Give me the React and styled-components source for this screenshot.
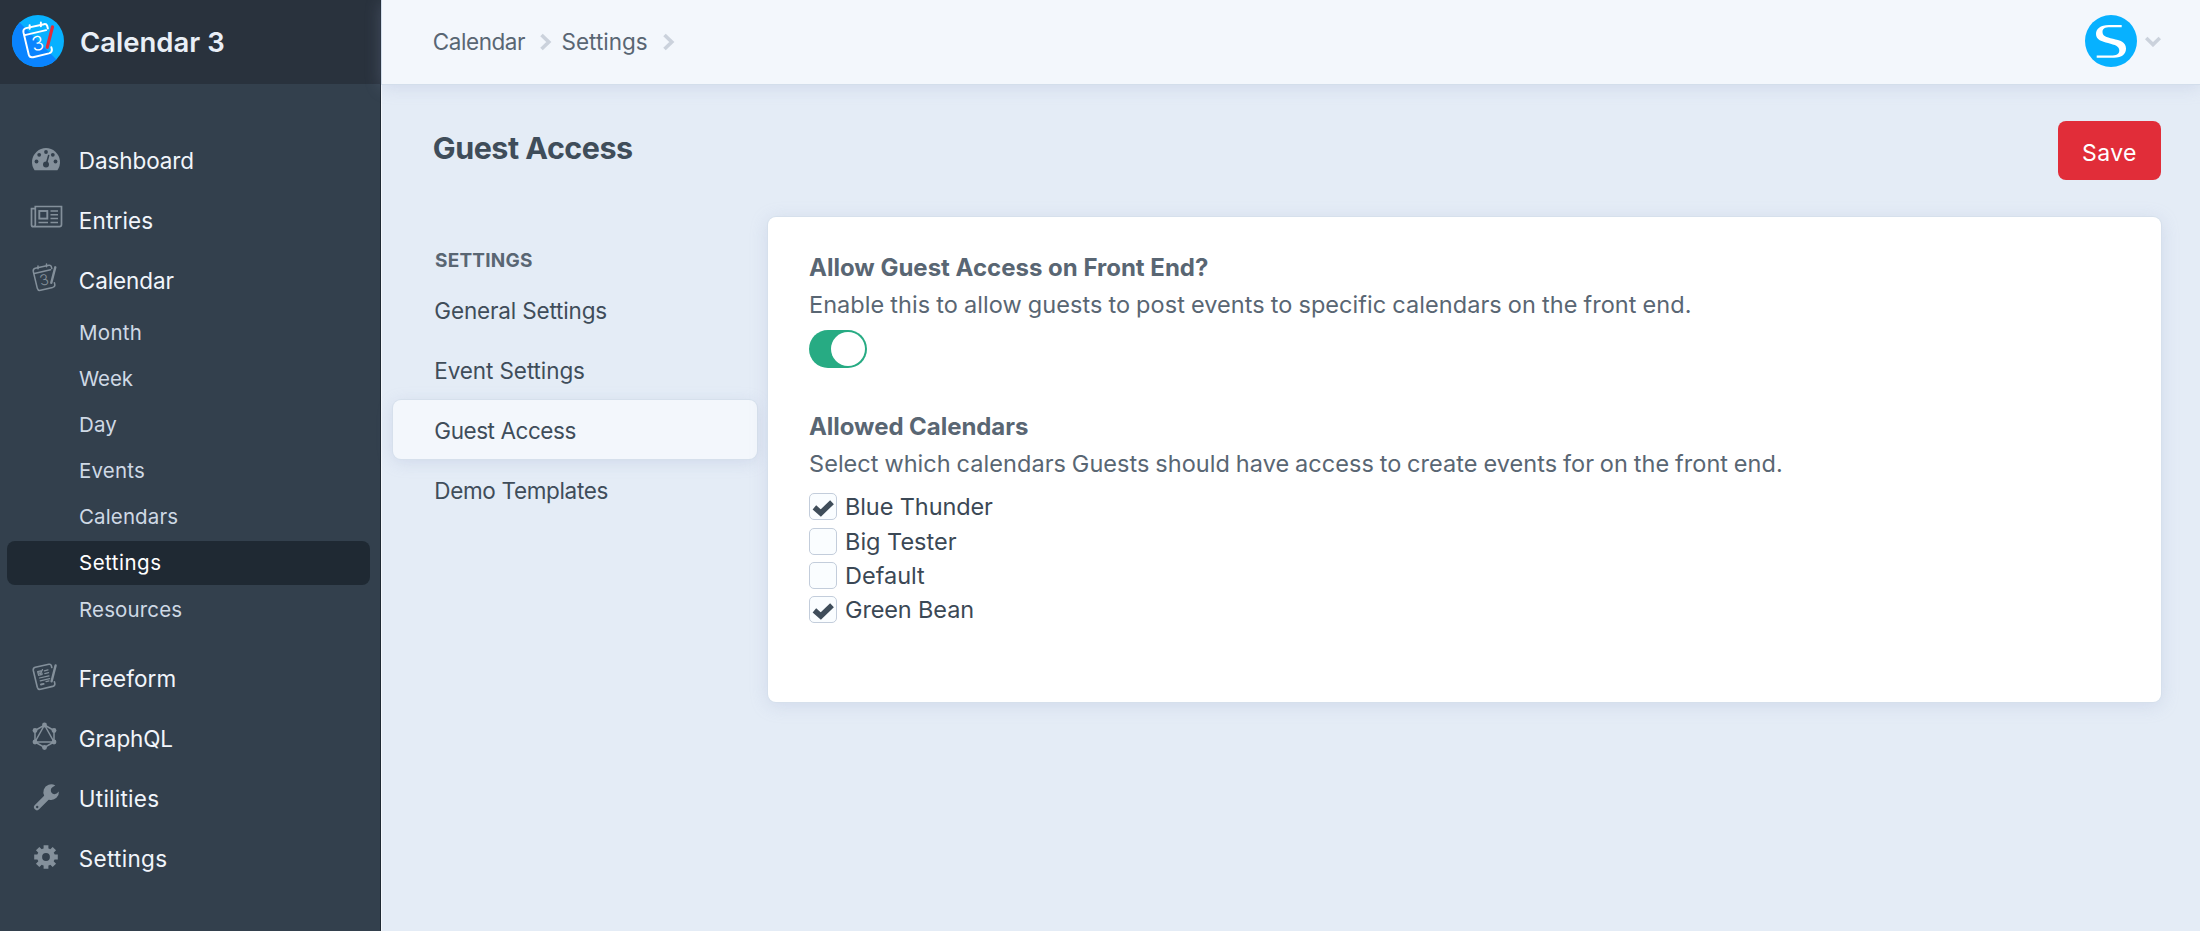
import React, { useState } from 'react';
import styled, { createGlobalStyle, css } from 'styled-components';

const GlobalStyle = createGlobalStyle`
  * { box-sizing: border-box; }
  body {
    margin: 0;
    background: #e4ecf6;
    font-family: Inter, Roboto, "Liberation Sans", sans-serif;
    color: #3f4d5a;
  }
`;

const tracking = css`
  letter-spacing: ${({ $track = 0 }) => $track}px;
  word-spacing: ${({ $word = 0 }) => $word}px;
`;

const Page = styled.div`
  display: flex;
  height: 931px;
  overflow: hidden;
`;

/* Sidebar */

const Sidebar = styled.aside`
  flex: none;
  width: 381px;
  background: #33404d;
  border-right: 1px solid #1f2933;
`;

const Brand = styled.header`
  display: flex;
  align-items: center;
  height: 84px;
  padding: 0 0 2px 12px;
  gap: 15px;
  background: #29323d;
`;

const BrandName = styled.span`
  padding-top: 2px;
  font-size: 27.5px;
  font-weight: 600;
  line-height: 36px;
  color: #e9eff7;
`;

const Nav = styled.nav`
  display: flex;
  flex-direction: column;
  padding-top: 46px;
`;

const NavItem = styled.a`
  display: flex;
  align-items: center;
  height: 60px;
  font-size: 22.5px;
  color: #f1f5fb;
  ${tracking}
`;

const NavIcon = styled.svg`
  flex: none;
  width: 78px;
  height: 60px;
  margin-right: 0.8px;
  color: #84909b;
`;

const SubNav = styled.div`
  display: flex;
  flex-direction: column;
  gap: 2.2px;
  margin: 0 0 17.6px;
`;

const SubNavItem = styled.a`
  display: flex;
  align-items: center;
  height: 44px;
  margin: 0 10px 0 7px;
  padding-left: 72px;
  border-radius: 8px;
  font-size: 20.5px;
  color: ${({ $active }) => ($active ? '#ffffff' : '#cfd9e5')};
  background: ${({ $active }) => ($active ? '#1f2933' : 'transparent')};
  ${tracking}
`;

/* Main area */

const Main = styled.main`
  flex: 1;
  min-width: 0;
  border-left: 1px solid #f3f7fc;
`;

const TopBar = styled.header`
  display: flex;
  justify-content: space-between;
  align-items: center;
  height: 84px;
  padding: 0 39px 2px 50.8px;
  background: #f3f7fc;
  box-shadow: 0 0 0 1px #d3deeb, 0 3px 16px rgba(154, 165, 205, 0.28);
`;

const Crumbs = styled.div`
  display: flex;
  align-items: center;
  font-size: 22.5px;
  color: #596673;
`;

const Crumb = styled.a`
  padding-top: 1px;
  ${tracking}
`;

const CrumbArrow = styled.svg`
  width: 12px;
  height: 18px;
  margin: 1px 9.5px 0 15px;
`;

const Account = styled.div`
  display: flex;
  align-items: center;
  gap: 8px;
`;

const TitleRow = styled.div`
  display: flex;
  justify-content: space-between;
  padding: 37px 39px 0 50.8px;
`;

const Title = styled.h1`
  margin: 7px 0 0;
  font-size: 30.5px;
  line-height: 40px;
  font-weight: 700;
  color: #3f4d5a;
  ${tracking}
`;

const SaveButton = styled.button`
  width: 103px;
  height: 59px;
  padding: 5px 0 0;
  border: 0;
  border-radius: 8px;
  background: #e12d39;
  color: #ffffff;
  font: 400 23px Inter, sans-serif;
  ${tracking}
`;

const Columns = styled.div`
  display: flex;
  align-items: flex-start;
  padding: 37px 39px 0 11px;
`;

const Menu = styled.nav`
  flex: none;
  width: 364px;
  margin-right: 11px;
  padding-top: 30px;
`;

const MenuHeading = styled.h6`
  margin: 0 0 6px;
  padding-left: 42px;
  font-size: 19px;
  font-weight: 700;
  line-height: 27px;
  color: #596673;
  ${tracking}
`;

const MenuItem = styled.a`
  display: flex;
  align-items: center;
  height: 59px;
  margin-bottom: 1px;
  padding: 1px 0 0 41.3px;
  border-radius: 8px;
  font-size: 22.5px;
  color: #3f4d5a;
  ${tracking}
  ${({ $active }) =>
    $active &&
    css`
      background: #f3f7fc;
      box-shadow: 0 0 0 1px #d6e0ec, 0 3px 16px rgba(154, 165, 205, 0.28);
    `}
`;

const Card = styled.section`
  flex: 1;
  height: 485px;
  padding: 31.5px 41px 0;
  border-radius: 8px;
  background: #ffffff;
  box-shadow: 0 0 0 1px #d6e0ec, 0 3px 18px rgba(154, 165, 205, 0.28);
`;

const Field = styled.div`
  & + & { margin-top: 40px; }
`;

const FieldHeading = styled.h2`
  margin: 0;
  font-size: 24px;
  font-weight: 700;
  line-height: 37px;
  color: #596673;
  ${tracking}
`;

const Instructions = styled.p`
  margin: 0;
  font-size: 23.5px;
  line-height: 38px;
  white-space: nowrap;
  color: #596673;
  ${tracking}
`;

const Switch = styled.button`
  display: flex;
  justify-content: ${({ $on }) => ($on ? 'flex-end' : 'flex-start')};
  width: 58px;
  height: 38px;
  margin: 6.5px 0 0;
  padding: 2px;
  border: 0;
  border-radius: 19px;
  background: ${({ $on }) => ($on ? '#27ab83' : '#9aa5b1')};
`;

const Knob = styled.span`
  width: 34px;
  height: 34px;
  border-radius: 50%;
  background: #ffffff;
`;

const Options = styled.div`
  margin-top: 6.8px;
`;

const Option = styled.label`
  display: flex;
  align-items: center;
  gap: 8px;
  height: 34.3px;
  font-size: 23.5px;
  color: #3b4855;
  ${tracking}
`;

const Box = styled.span`
  display: grid;
  place-items: center;
  width: 28px;
  height: 27px;
  border: 1.5px solid #c3cddb;
  border-radius: 5px;
  background: #fafdff;
`;

const CARD_OUTLINE =
  'M51.8 18.5 51.3 16.6Q50.7 14.9 48.9 15.3L35.3 18.3Q32.8 19 33.3 21.5L37.3 38.3Q38 40.9 40.6 40.3L52.6 37.4Q55.2 36.7 54.8 34.3L54.4 32.8';

function CalendarDrawing({ pen = 'currentColor' }) {
  return (
    <g fill="none" stroke="currentColor" strokeWidth="1.5" strokeLinecap="round">
      <path d={CARD_OUTLINE} />
      <path d="M34.3 23.6 50.5 19.8M38 16v2.8M46.5 14v2.8" />
      <path d="M55.3 17.3 51.3 32.8" stroke={pen} strokeWidth="2.4" />
      <text
        x="44" y="35.2" fill="currentColor" stroke="none" fontSize="15" fontWeight="300"
        textAnchor="middle" transform="rotate(-12 44 30)"
      >
        3
      </text>
    </g>
  );
}

function Logo() {
  return (
    <svg width="53" height="52" viewBox="0 0 53 52">
      <circle cx="26" cy="26" r="26" fill="#07b1ff" />
      <path d="M7.6 7.6A26 26 0 1 0 44.4 44.4Z" fill="#0a84ff" />
      <g color="#ffffff" transform="translate(-32.5 -11) scale(1.32)">
        <CalendarDrawing pen="#e12d39" />
      </g>
    </svg>
  );
}

const icons = {
  dashboard: (
    <>
      <path d="M34.6 40.2A14 14 0 1 1 57.4 40.2Z" fill="currentColor" />
      <g fill="#33404d" stroke="#33404d">
        {[[36.5, 31.5], [39.2, 24.8], [46, 22], [52.8, 24.8], [55.5, 31.5]].map(([x, y]) => (
          <circle key={x} cx={x} cy={y} r="1.9" stroke="none" />
        ))}
        <circle cx="46" cy="34.5" r="3" stroke="none" />
        <path d="M46.3 34 48.6 25.6" strokeWidth="1.6" strokeLinecap="round" />
      </g>
    </>
  ),
  entries: (
    <g fill="none" stroke="currentColor" strokeWidth="1.7">
      <path d="M35.3 35V16.5H61.5V34.6Q61.5 36.7 59.4 36.7H33.5Q31.5 36.7 31.5 34.7V18.7H35.3V34.7Q35.3 36.5 33.5 36.7" />
      <rect x="39.3" y="21" width="8" height="7.6" strokeWidth="1.9" />
      <path d="M50.5 21H58M50.5 24.8H58M50.5 28.6H58M50.5 32.4H58M38.5 32.4H48" strokeWidth="1.5" />
    </g>
  ),
  calendar: <CalendarDrawing />,
  freeform: (
    <g fill="none" stroke="currentColor" strokeWidth="1.6" strokeLinecap="round">
      <path d={CARD_OUTLINE} />
      <path d="M55.6 16.5 51.6 32.3" strokeWidth="2.4" />
      <path
        strokeWidth="1.2"
        d="M37.6 22.6 41 21.8M37.6 22.6 38.6 26.4 42 25.6V24M39 23.7 40.2 24.9 42.5 20.6M44.3 21.8 48 20.9M44.8 24.6 48.6 23.7M39.5 29 49 26.8M40.2 31.8 49.7 29.6M46 32.6 49 31.9"
      />
      <path d="M41 35.5 43.6 34.9" strokeWidth="2" />
    </g>
  ),
  graphql: (
    <g fill="currentColor" stroke="currentColor" strokeWidth="1.5">
      <path
        fill="none"
        d="M44.5 16 54 21.5V33L44.5 38.5 35 33V21.5ZM44.5 16 54 33H35Z"
      />
      {[[44.5, 16], [54, 21.5], [54, 33], [44.5, 38.5], [35, 33], [35, 21.5]].map(([x, y]) => (
        <circle key={`${x}-${y}`} cx={x} cy={y} r="2.4" stroke="none" />
      ))}
    </g>
  ),
  utilities: (
    <>
      <path
        fill="none" stroke="currentColor" strokeWidth="6" strokeLinecap="round"
        d="M37 38.2 48 27.2"
      />
      <path
        fill="currentColor"
        d="M55.3 16.6A7.8 7.8 0 1 0 58.9 22.6Q55.5 26.5 52.4 24.6Q50 22.6 51.2 19.6Q52.3 17.9 55.3 16.6Z"
      />
      <circle cx="37.2" cy="38" r="1.2" fill="#33404d" />
    </>
  ),
  settings: (
    <g stroke="currentColor" fill="none">
      <circle cx="46" cy="28" r="6.4" strokeWidth="5" />
      {[0, 45, 90, 135].map((a) => (
        <path
          key={a} strokeWidth="4.8" transform={`rotate(${a} 46 28)`}
          d="M46 16.2V21M46 35V39.8"
        />
      ))}
    </g>
  ),
};

const primary = [
  { label: 'Dashboard', icon: 'dashboard', track: -0.1 },
  { label: 'Entries', icon: 'entries', track: 0.15 },
  { label: 'Calendar', icon: 'calendar', track: -0.1 },
];

const calendarPages = [
  { label: 'Month', track: 0.3 },
  { label: 'Week', track: -0.1 },
  { label: 'Day', track: 0.1 },
  { label: 'Events', track: 0.2 },
  { label: 'Calendars', track: 0.12 },
  { label: 'Settings', track: 0.5, active: true },
  { label: 'Resources', track: 0.15 },
];

const secondary = [
  { label: 'Freeform', icon: 'freeform', track: 0.1 },
  { label: 'GraphQL', icon: 'graphql', track: -0.1 },
  { label: 'Utilities', icon: 'utilities', track: 0.25 },
  { label: 'Settings', icon: 'settings', track: 0.3 },
];

const menu = [
  { label: 'General Settings', track: -0.16 },
  { label: 'Event Settings', track: -0.1 },
  { label: 'Guest Access', track: -0.44, active: true },
  { label: 'Demo Templates', track: -0.34 },
];

const calendars = [
  { label: 'Blue Thunder', checked: true, track: -0.1 },
  { label: 'Big Tester', checked: false, track: 0 },
  { label: 'Default', checked: false, track: 0 },
  { label: 'Green Bean', checked: true, track: -0.13 },
];

function NavLinks({ items }) {
  return items.map(({ label, icon, track }) => (
    <NavItem key={label} $track={track}>
      <NavIcon viewBox="0 0 78 60">{icons[icon]}</NavIcon>
      {label}
    </NavItem>
  ));
}

function Chevron() {
  return (
    <CrumbArrow viewBox="0 0 12 18">
      <path d="M1.5 2 8.8 9 1.5 16" fill="none" stroke="#cbd2dc" strokeWidth="3.6" />
    </CrumbArrow>
  );
}

export default function App() {
  const [guests, setGuests] = useState(true);
  return (
    <Page>
      <GlobalStyle />
      <Sidebar>
        <Brand>
          <Logo />
          <BrandName>Calendar 3</BrandName>
        </Brand>
        <Nav>
          <NavLinks items={primary} />
          <SubNav>
            {calendarPages.map(({ label, track, active }) => (
              <SubNavItem key={label} $track={track} $active={active}>{label}</SubNavItem>
            ))}
          </SubNav>
          <NavLinks items={secondary} />
        </Nav>
      </Sidebar>
      <Main>
        <TopBar>
          <Crumbs>
            <Crumb $track={-0.45}>Calendar</Crumb>
            <Chevron />
            <Crumb>Settings</Crumb>
            <Chevron />
          </Crumbs>
          <Account>
            <svg width="52" height="52" viewBox="0 0 52 52">
              <circle cx="26" cy="26" r="26" fill="#07b1ff" />
              <path
                fill="#ffffff"
                d="M36.7 10H24C15 10 11 14 11 19C11 25 17 26.5 23 28C30 30 34.3 31 34.3 35.5C34.3 39.5 31 40.6 26 40.6H11.7V42.7H29C37 42.7 41 39 41 33.5C41 27 35 25.5 28 23.8C21 22 17.5 21 17.5 17C17.5 13.5 20 12.2 25 12.2H36.7Z"
              />
            </svg>
            <svg width="16" height="12" viewBox="0 0 16 12">
              <path d="M1.2 3 8 9.6 14.8 3" fill="none" stroke="#cbd2dc" strokeWidth="3.6" />
            </svg>
          </Account>
        </TopBar>
        <TitleRow>
          <Title $track={-0.5}>Guest Access</Title>
          <SaveButton $track={0.4}>Save</SaveButton>
        </TitleRow>
        <Columns>
          <Menu>
            <MenuHeading $track={0.22}>SETTINGS</MenuHeading>
            {menu.map(({ label, track, active }) => (
              <MenuItem key={label} $track={track} $active={active}>{label}</MenuItem>
            ))}
          </Menu>
          <Card>
            <Field>
              <FieldHeading>Allow Guest Access on Front End?</FieldHeading>
              <Instructions $track={0.05} $word={-0.6}>
                Enable this to allow guests to post events to specific calendars on the front end.
              </Instructions>
              <Switch $on={guests} onClick={() => setGuests(!guests)}>
                <Knob />
              </Switch>
            </Field>
            <Field>
              <FieldHeading $track={-0.05}>Allowed Calendars</FieldHeading>
              <Instructions $track={0.05} $word={-0.85}>
                Select which calendars Guests should have access to create events for on the front end.
              </Instructions>
              <Options>
                {calendars.map(({ label, checked, track }) => (
                  <Option key={label} $track={track}>
                    <Box>
                      {checked && (
                        <svg width="24" height="20" viewBox="0 0 24 20">
                          <path
                            d="M3.4 10.4 9.8 16 21 5.2" fill="none"
                            stroke="#3f4d5a" strokeWidth="5.4"
                          />
                        </svg>
                      )}
                    </Box>
                    {label}
                  </Option>
                ))}
              </Options>
            </Field>
          </Card>
        </Columns>
      </Main>
    </Page>
  );
}
